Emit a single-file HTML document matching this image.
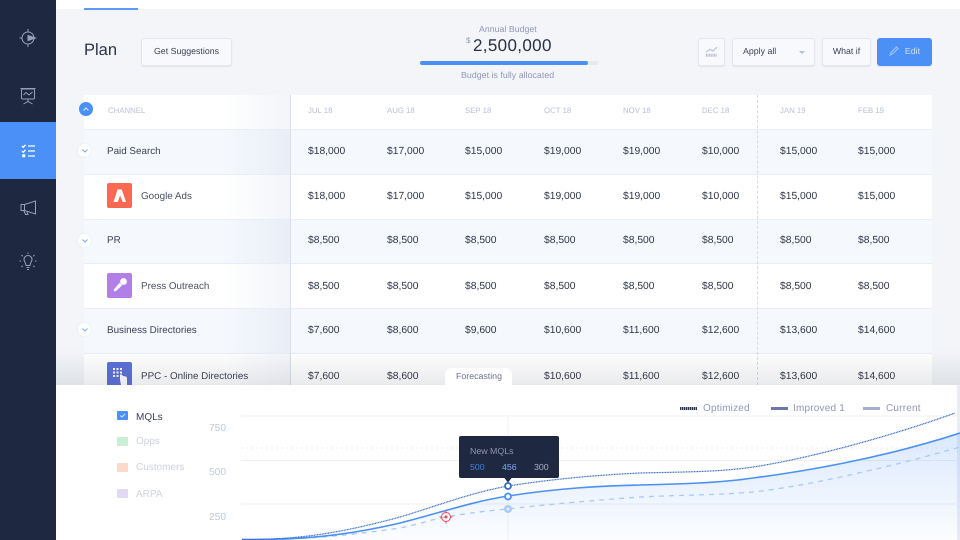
<!DOCTYPE html>
<html><head><meta charset="utf-8"><style>
*{box-sizing:border-box;margin:0;padding:0}
html,body{width:960px;height:540px;overflow:hidden;background:#f3f5f9;font-family:"Liberation Sans",sans-serif;text-rendering:geometricPrecision}
.a{position:absolute}
#root{position:relative;width:960px;height:540px;overflow:hidden;filter:blur(.35px)}
.row{position:absolute;left:84px;width:848px;border-bottom:1px solid #e8eef8}
.row.b{background:#f5f8fd}.row.w{background:#fff}
.row .g{position:absolute;left:140px;width:66px;top:0;bottom:0}
.row.b .g{background:linear-gradient(90deg,rgba(232,237,247,0),#e9eef7)}
.row.w .g{background:linear-gradient(90deg,rgba(240,243,249,0),#f3f5fa)}
.row span{position:absolute;top:0;bottom:2px;display:flex;align-items:center;font-size:10.3px;color:#2f3649;white-space:nowrap}
.c1{left:224px}.c2{left:303px}.c3{left:381px}.c4{left:460px}.c5{left:539px}.c6{left:618px}.c7{left:696px}.c8{left:774px}
.h span{font-size:7.8px;color:#b9c0d6;bottom:4px}
.row .lab{left:23px;color:#3a4155;font-size:9.85px}.row .lab2{left:57px;color:#4a5063;font-size:9.85px}
.row.p span{bottom:0}
.row.q span{bottom:0}
.tog{position:absolute;left:78px;width:13px;height:13px;border-radius:50%;background:#fff;box-shadow:0 0 2px rgba(120,150,210,.18)}
.logo{position:absolute;left:107px;width:25px;height:25px;border-radius:2px}
.btn{position:absolute;top:38px;height:28px;padding-bottom:2px;background:#f8f9fc;border:1px solid #e4e7ef;border-radius:3px;box-shadow:0 1px 1px rgba(150,160,190,.2);font-size:8.8px;color:#3d4356;display:flex;align-items:center;justify-content:center}
.t{position:absolute;white-space:nowrap}
.chk{position:absolute;left:117px;width:11px;height:9px;border-radius:1px}
.leg{font-size:10px;color:#8e97b8;letter-spacing:.2px}
.yl{font-size:10.2px;color:#c3c9dd;left:209px}
</style></head><body><div id="root">

<div class="a" style="left:56px;top:0;width:904px;height:9px;background:#fff"></div>
<div class="a" style="left:84px;top:8px;width:54px;height:2px;background:#5b9bf6"></div>

<div class="t" style="left:84px;top:41px;font-size:16.5px;color:#2c3347">Plan</div>
<div class="btn" style="left:141px;width:91px">Get Suggestions</div>

<div class="t" style="left:479px;top:24px;font-size:8.8px;color:#8f98b8">Annual Budget</div>
<div class="t" style="left:466px;top:36px;font-size:8px;color:#8f98b8">$</div>
<div class="t" style="left:473px;top:36px;font-size:17px;letter-spacing:.35px;color:#2a3146">2,500,000</div>
<div class="a" style="left:420px;top:61px;width:178px;height:4px;border-radius:2px;background:#e6e9f0"></div>
<div class="a" style="left:420px;top:61px;width:168px;height:4px;border-radius:2px;background:#4a8ff5"></div>
<div class="t" style="left:461px;top:70px;font-size:8.8px;letter-spacing:.03px;color:#8f98b8">Budget is fully allocated</div>

<div class="btn" style="left:698px;width:27px"><svg width="13" height="13" viewBox="0 0 13 13" fill="none" stroke="#b4bcd3" stroke-width="1"><path d="M1 7L5 4.500 8 6 12 2"/><path d="M1 9.500H12M1 11H12" stroke-dasharray="1 .6" stroke-width="1.500"/></svg></div>
<div class="btn" style="left:732px;width:83px;justify-content:flex-start;padding-left:10px">Apply all<svg class="a" style="left:66px;top:12px" width="7" height="5"><path d="M0 0H6L3 3z" fill="#b4bcd3"/></svg></div>
<div class="btn" style="left:822px;width:49px">What if</div>
<div class="btn" style="left:877px;width:55px;background:#4a90f7;border-color:#4a90f7;color:#cfe1fc"><svg width="10" height="10" viewBox="0 0 10 10" fill="none" stroke="#a8c9fa" style="margin-right:6px"><path d="M1 9L2 6.500 7.500 1 9 2.500 3.500 8z"/></svg>Edit</div>

<!-- table -->
<div class="row w h" style="top:95px;height:35px"><div class="g"></div>
<span style="left:24px">CHANNEL</span><span class="c1">JUL 18</span><span class="c2">AUG 18</span><span class="c3">SEP 18</span><span class="c4">OCT 18</span><span class="c5">NOV 18</span><span class="c6">DEC 18</span><span class="c7">JAN 19</span><span class="c8">FEB 19</span></div>

<div class="row b" style="top:130px;height:45px"><div class="g"></div><span class="lab">Paid Search</span><span class="c1">$18,000</span><span class="c2">$17,000</span><span class="c3">$15,000</span><span class="c4">$19,000</span><span class="c5">$19,000</span><span class="c6">$10,000</span><span class="c7">$15,000</span><span class="c8">$15,000</span></div>
<div class="row w" style="top:175px;height:45px"><div class="g"></div><span class="lab2">Google Ads</span><span class="c1">$18,000</span><span class="c2">$17,000</span><span class="c3">$15,000</span><span class="c4">$19,000</span><span class="c5">$19,000</span><span class="c6">$10,000</span><span class="c7">$15,000</span><span class="c8">$15,000</span></div>
<div class="row b" style="top:220px;height:44px"><div class="g"></div><span class="lab">PR</span><span class="c1">$8,500</span><span class="c2">$8,500</span><span class="c3">$8,500</span><span class="c4">$8,500</span><span class="c5">$8,500</span><span class="c6">$8,500</span><span class="c7">$8,500</span><span class="c8">$8,500</span></div>
<div class="row w q" style="top:264px;height:45px"><div class="g"></div><span class="lab2">Press Outreach</span><span class="c1">$8,500</span><span class="c2">$8,500</span><span class="c3">$8,500</span><span class="c4">$8,500</span><span class="c5">$8,500</span><span class="c6">$8,500</span><span class="c7">$8,500</span><span class="c8">$8,500</span></div>
<div class="row b" style="top:309px;height:45px"><div class="g"></div><span class="lab">Business Directories</span><span class="c1">$7,600</span><span class="c2">$8,600</span><span class="c3">$9,600</span><span class="c4">$10,600</span><span class="c5">$11,600</span><span class="c6">$12,600</span><span class="c7">$13,600</span><span class="c8">$14,600</span></div>
<div class="row w p" style="top:354px;height:46px"><div class="g"></div><span class="lab2" style="color:#3a4155">PPC - Online Directories</span><span class="c1">$7,600</span><span class="c2">$8,600</span><span class="c3">$9,600</span><span class="c4">$10,600</span><span class="c5">$11,600</span><span class="c6">$12,600</span><span class="c7">$13,600</span><span class="c8">$14,600</span></div>

<div class="a" style="left:290px;top:95px;width:1px;height:290px;background:#d9dfec"></div>
<div class="a" style="left:757px;top:95px;height:290px;border-left:1px dashed #d5dae8"></div>

<!-- toggles -->
<div class="a" style="left:79px;top:102px;width:14px;height:14px;border-radius:50%;background:#4a90f7"><svg class="a" style="left:4px;top:5px" width="6" height="4" fill="none" stroke="#dbe8fd"><path d="M.5 3.500L3 1 5.500 3.500"/></svg></div>
<div class="tog" style="top:144px"><svg class="a" style="left:4px;top:5px" width="6" height="4" fill="none" stroke="#7aa9f2"><path d="M.5.500L3 3 5.500.500"/></svg></div>
<div class="tog" style="top:234px"><svg class="a" style="left:4px;top:5px" width="6" height="4" fill="none" stroke="#7aa9f2"><path d="M.5.500L3 3 5.500.500"/></svg></div>
<div class="tog" style="top:323px"><svg class="a" style="left:4px;top:5px" width="6" height="4" fill="none" stroke="#7aa9f2"><path d="M.5.500L3 3 5.500.500"/></svg></div>

<!-- logos -->
<div class="logo" style="top:183px;background:#fb6a50"><svg width="25" height="25" viewBox="0 0 25 25" fill="#fff"><path d="M10.500 6.500H14.800L19 19H15.800L13 12.500 10.800 19H6.500z"/></svg></div>
<div class="logo" style="top:273px;background:#b27fe8"><svg width="25" height="25" viewBox="0 0 25 25" fill="#fff"><circle cx="16.500" cy="8.500" r="3.400"/><path d="M12.700 9.800L15.200 12.300 9 18 7 18.500 6.800 16.500z"/></svg></div>
<div class="logo" style="top:362px;background:#5b6fd8"><svg width="25" height="25" viewBox="0 0 25 25" fill="#fff"><path d="M6 6h2v2H6zM9.500 6h2v2h-2zM13 6h2v2h-2zM6 9.500h2v2H6zM9.500 9.500h2v2h-2zM13 9.500h2v2h-2zM6 13h2v2H6zM9.500 13h2v2h-2z"/><path d="M13 13l1-1 2 2 3 .5 1 1.500V23h-6l-1-5z"/></svg></div>

<!-- shadow over table bottom -->
<div class="a" style="left:56px;top:350px;width:904px;height:35px;background:linear-gradient(180deg,rgba(60,65,80,0),rgba(60,65,80,.11))"></div>

<!-- sidebar -->
<div class="a" style="left:0;top:0;width:56px;height:540px;background:#1f2841"></div>
<div class="a" style="left:0;top:122px;width:56px;height:57px;background:#4a90f7"></div>
<svg class="a" style="left:0;top:0" width="56" height="290" fill="none" stroke="#98a0b8" stroke-width="1">
<circle cx="28" cy="38" r="6"/><path d="M28 29V32M28 44V47M19.500 38H22"/><path d="M28 35.500L35.500 38 28 40.500z" fill="#98a0b8"/>
<rect x="21.500" y="89" width="13" height="10" rx="1"/><path d="M20.500 88.500H35.500M28 99V102M23.500 104L28 101.500 32.500 104M23.500 95L26 92.500 29 95 32.500 92"/>
<g stroke="#fff" stroke-width="1.300"><path d="M28 146H35M28 151H35M28 156H35"/><path d="M22 146L23.300 147.300 25.500 144.800M22 151L23.300 152.300 25.500 149.800"/><path d="M22.500 154.500H25V157H22.500z" fill="#fff" stroke-width=".6"/></g>
<path d="M24.500 204.500L35.500 201V214L24.500 210.500zM24.500 204.500H21V210.500H24.500M24 211L25.500 214.500H28L27 212"/>
<path d="M28 255.500C25.500 255.500 24 257.500 24 259.500 24 261.500 26 263 26 265.500H30C30 263 32 261.500 32 259.500 32 257.500 30.500 255.500 28 255.500zM26.500 267.500H29.500M27 269.500H29"/>
<path d="M28 252.500V254M21.500 255L22.800 256.300M34.500 255L33.200 256.300M19.500 261H21M35 261H36.500M21.500 267L22.800 265.700M34.500 267L33.200 265.700"/>
</svg>

<!-- forecasting tab + panel -->
<div class="a" style="left:56px;top:385px;width:901px;height:155px;background:#fff"></div>
<div class="a" style="left:957px;top:385px;width:3px;height:155px;background:#e9edf5"></div>
<div class="a" style="left:445px;top:368px;width:67px;height:18px;background:#fff;border-radius:7px 7px 0 0"></div>
<div class="t" style="left:456px;top:371px;font-size:8.800px;color:#6d748c">Forecasting</div>

<div class="chk" style="top:411px;background:#4a90f7"></div>
<svg class="a" style="left:119px;top:413px" width="7" height="5" fill="none" stroke="#dbe8fd"><path d="M1 2.500L3 4 6 1"/></svg>
<div class="chk" style="top:437px;background:#c8efd6"></div>
<div class="chk" style="top:463px;background:#fdd9cc"></div>
<div class="chk" style="top:489px;background:#e3d9f3"></div>
<div class="t" style="left:136px;top:412px;font-size:10px;color:#3a4155">MQLs</div>
<div class="t" style="left:136px;top:436px;font-size:10px;color:#ccd1e2">Opps</div>
<div class="t" style="left:136px;top:462px;font-size:10px;color:#ccd1e2">Customers</div>
<div class="t" style="left:136px;top:489px;font-size:10px;color:#ccd1e2">ARPA</div>
<div class="t yl" style="top:423px">750</div>
<div class="t yl" style="top:467px">500</div>
<div class="t yl" style="top:512px">250</div>

<div class="a" style="left:680px;top:407px;width:17px;height:3px;background:repeating-linear-gradient(90deg,#2a3148 0 1px,#9aa1b8 1px 2px)"></div>
<div class="t leg" style="left:703px;top:403px">Optimized</div>
<div class="a" style="left:771px;top:407px;width:17px;height:3px;background:#6b78ad"></div>
<div class="t leg" style="left:793px;top:403px">Improved 1</div>
<div class="a" style="left:863px;top:407px;width:17px;height:3px;background:#a4aecf"></div>
<div class="t leg" style="left:886px;top:403px">Current</div>

<svg class="a" style="left:0;top:385px" width="960" height="155" viewBox="0 385 960 155" fill="none">
<defs><linearGradient id="f" x1="0" y1="433" x2="0" y2="540" gradientUnits="userSpaceOnUse"><stop offset="0" stop-color="#4a90f7" stop-opacity=".2"/><stop offset="1" stop-color="#4a90f7" stop-opacity=".02"/></linearGradient></defs>
<path d="M241 416H960M241 460.500H960M241 504H960M508 416V540" stroke="#eef0f5"/>
<path d="M241 448H960" stroke="#eceef4" stroke-dasharray="2 3"/>
<path d="M242 539.500C300 540 345 536 400 523C440 513 470 502 508 496C560 488 600 486 640 485C680 484 720 483 753 478C800 472 880 459 960 433V540H242z" fill="url(#f)"/>
<path d="M242 539.500C300 540 345 536 400 528C420 524 430 520 445 517C470 513 485 511 508 509C560 503 600 500 640 497C680 495 720 495 753 492C800 487 880 470 960 447" stroke="#a9c9f8" stroke-width="1.300" stroke-dasharray="5 5"/>
<path d="M242 539.500C300 540 345 536 400 523C440 513 470 502 508 496C560 488 600 486 640 485C680 484 720 483 753 478C800 472 880 459 960 433" stroke="#4a90f7" stroke-width="1.600"/>
<path d="M242 539.500C300 540 345 532 400 517C440 505 470 493 508 486C560 478 600 475 640 473C680 472 720 472 753 467C800 460 880 440 955 413" stroke="#2f66bd" stroke-width="1.200" stroke-dasharray="1 .6"/>
<circle cx="508" cy="509" r="4" fill="#a9c9f8"/><circle cx="508" cy="509" r="1.500" fill="#e6effd"/>
<circle cx="508" cy="496.500" r="3" fill="#fff" stroke="#4a90f7" stroke-width="1.800"/>
<circle cx="508" cy="486" r="3" fill="#fff" stroke="#2f6cc7" stroke-width="1.800"/>
<g stroke="#ee4a55" stroke-width="1"><circle cx="446" cy="517" r="4.500"/><path d="M446 510.500V513M446 521V523.500M439.500 517H442M450 517H452.500"/></g><circle cx="446" cy="517" r="1.500" fill="#ee4a55"/>
<path d="M504 477.500H512L508 482.500z" fill="#1f2841"/>
</svg>

<div class="a" style="left:459px;top:436px;width:100px;height:42px;background:#1f2841;border-radius:2px"></div>
<div class="t" style="left:470px;top:446px;font-size:8.800px;color:#8f96ad">New MQLs</div>
<div class="t" style="left:470px;top:462px;font-size:8.800px;color:#3f7ed8">500</div>
<div class="t" style="left:502px;top:462px;font-size:8.800px;color:#7fa8e8">456</div>
<div class="t" style="left:534px;top:462px;font-size:8.800px;color:#aab0c4">300</div>

</div></body></html>
